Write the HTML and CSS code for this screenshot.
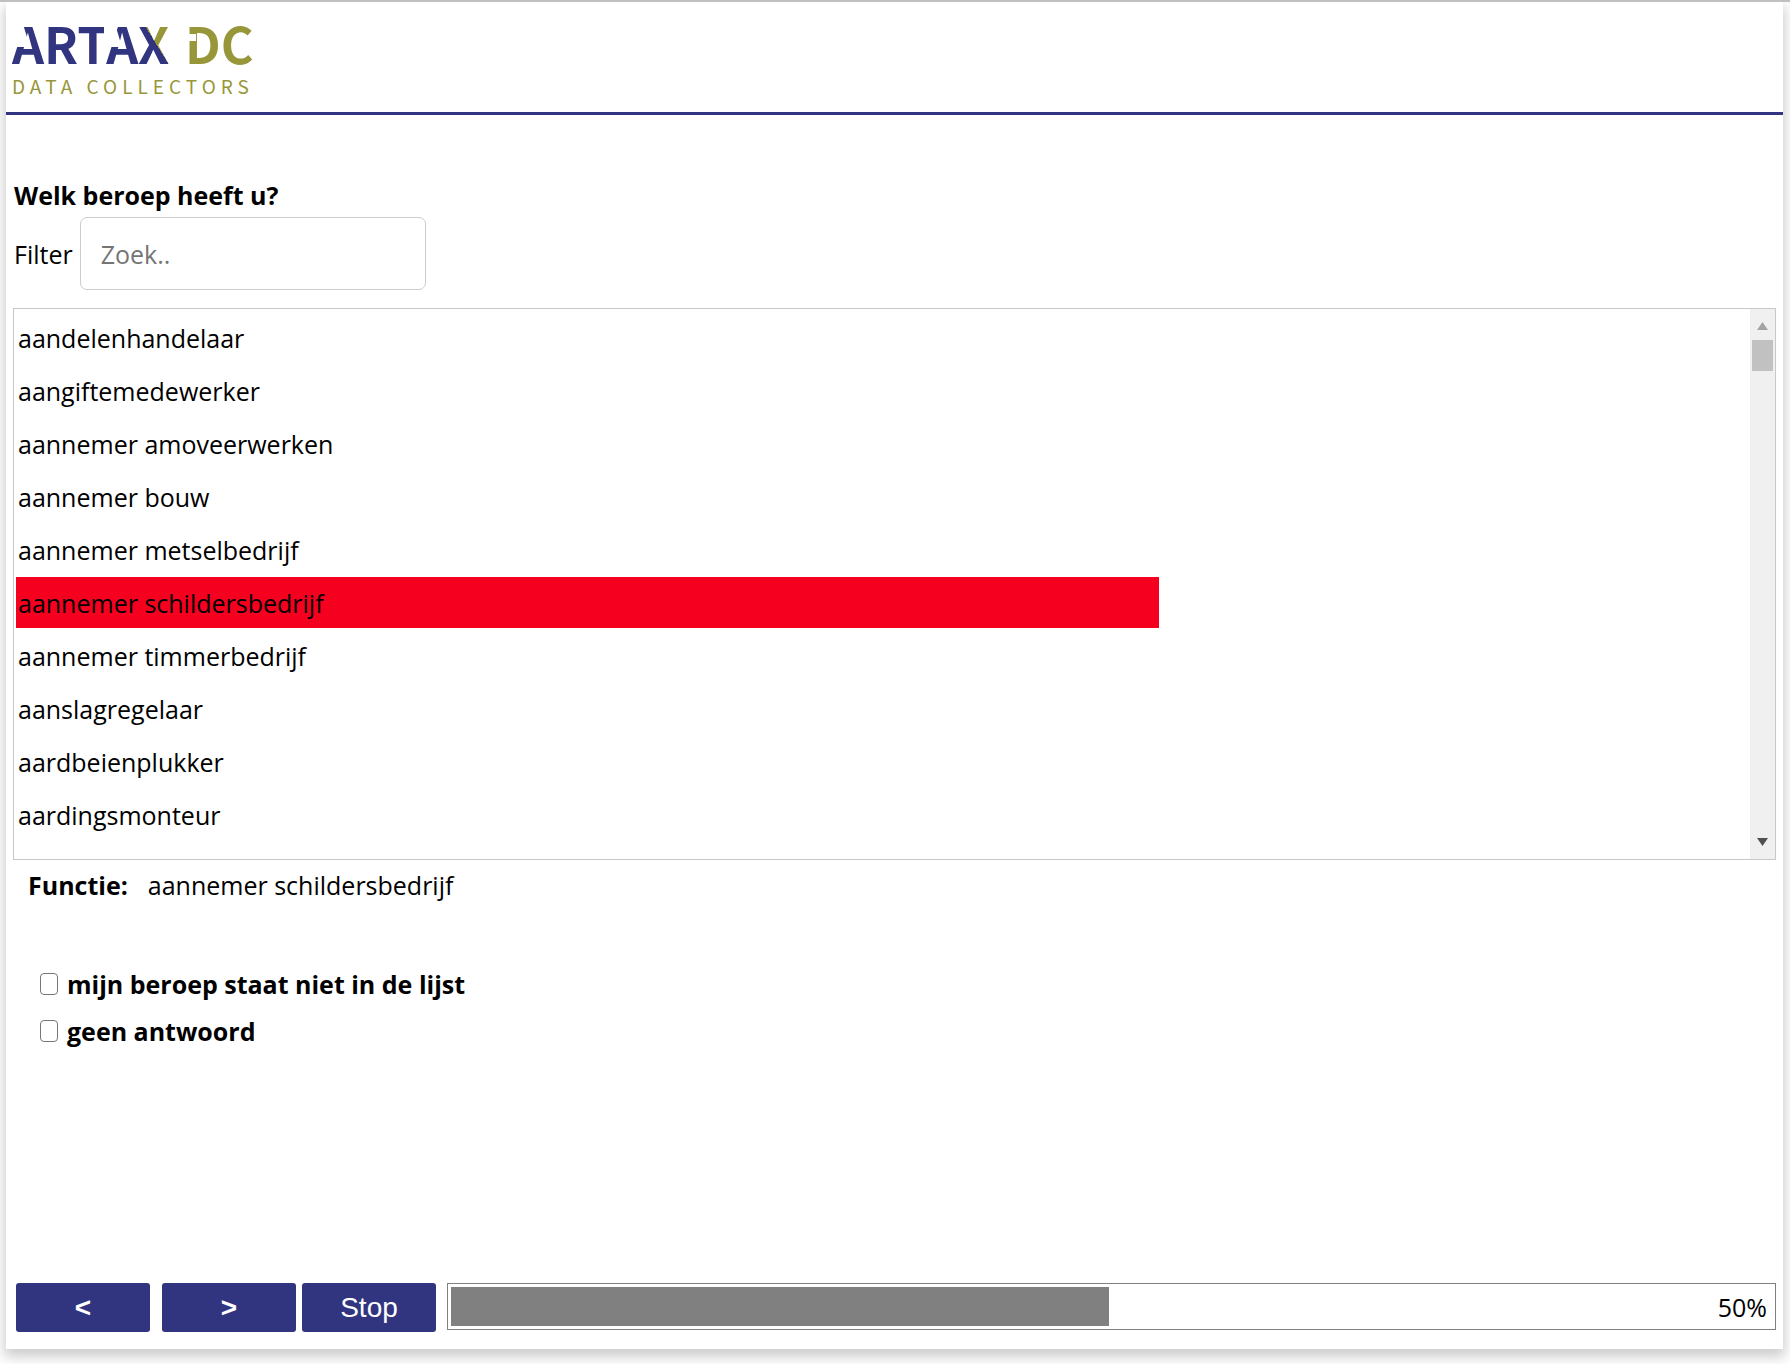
FILE: index.html
```html
<!DOCTYPE html>
<html lang="nl">
<head>
    <meta charset="UTF-8">
    <meta name="viewport" content="width=device-width, initial-scale=1.0">
    <title>Artax DC - Vragenlijst</title>
    <link rel="stylesheet" href="styles.css">
</head>
<body>
    <div class="page">
        <header class="header">
            <svg class="logo" width="260" height="80" viewBox="0 0 260 80" role="img" aria-label="Artax DC Data Collectors">
                <defs>
                    <!-- Blue with a green upper right arm for the X -->
                    <linearGradient id="x-fill" gradientUnits="userSpaceOnUse" x1="126" y1="40" x2="163" y2="17">
                        <stop offset="0.5" stop-color="#31347f"/>
                        <stop offset="0.5" stop-color="#97973a"/>
                    </linearGradient>
                </defs>
                <g class="logo-name">
                    <text class="blue" x="0" y="48">ARTA<tspan fill="url(#x-fill)">X</tspan></text>
                    <text class="green" x="173" y="48">DC</text>
                </g>
                <!-- Cuts in the letters -->
                <g fill="#fff">
                    <path d="M0 8h11l7 23H0z"/>
                    <path d="M92 8h11l7 23H92z"/>
                    <path d="M175 18h9v7h-9z"/>
                </g>
                <text class="logo-sub" x="0" y="78">DATA COLLECTORS</text>
            </svg>
        </header>

        <main class="content">
            <h1 class="question">Welk beroep heeft u?</h1>
            <div class="filter">
                <label for="filter-input">Filter</label>
                <input type="text" id="filter-input" placeholder="Zoek..">
            </div>

            <div class="list-box">
                <ul class="list" id="list" role="listbox" aria-label="Beroepen">
                    <li role="option">aandelenhandelaar</li>
                    <li role="option">aangiftemedewerker</li>
                    <li role="option">aannemer amoveerwerken</li>
                    <li role="option">aannemer bouw</li>
                    <li role="option">aannemer metselbedrijf</li>
                    <li role="option" class="selected" aria-selected="true">aannemer schildersbedrijf</li>
                    <li role="option">aannemer timmerbedrijf</li>
                    <li role="option">aanslagregelaar</li>
                    <li role="option">aardbeienplukker</li>
                    <li role="option">aardingsmonteur</li>
                    <li role="option">aannemer stallenbouw</li>
                </ul>
                <div class="scrollbar">
                    <svg width="11" height="8" viewBox="0 0 11 8"><path d="M5.5 0 11 8H0z" fill="#a3a3a3"/></svg>
                    <div class="thumb"></div>
                    <svg width="11" height="8" viewBox="0 0 11 8"><path d="M0 0h11L5.500 8z" fill="#505050"/></svg>
                </div>
            </div>

            <p class="result"><strong>Functie:</strong> <span id="result">aannemer schildersbedrijf</span></p>

            <div class="options">
                <label><input type="checkbox"> mijn beroep staat niet in de lijst</label>
                <label><input type="checkbox"> geen antwoord</label>
            </div>
        </main>

        <footer class="footer">
            <button type="button" class="btn btn-prev">&lt;</button>
            <button type="button" class="btn btn-next">&gt;</button>
            <button type="button" class="btn btn-stop">Stop</button>
            <div class="progress">
                <div class="progress-bar" style="width: 50%"></div>
                <span class="progress-text">50%</span>
            </div>
        </footer>
    </div>
</body>
</html>
```
FILE: styles.css
```css
* {
    box-sizing: border-box;
}
body {
    margin: 0;
    border-top: 2px solid #c0c0c0;
    font-family: "Open Sans", "Noto Sans", sans-serif;
    font-size: 25px;
    line-height: 32px;
    color: #000;
    background: #fff;
}
.page {
    display: flex;
    flex-direction: column;
    min-height: calc(100vh - 17px);
    margin: 0 7px 15px 6px;
    background: #fff;
    box-shadow: 0 6px 12px 2px rgba(0, 0, 0, 0.2);
}

/* Header with logo */
.header {
    padding: 14px 6px 16px;
    border-bottom: 3px solid #31347f;
}
.logo {
    display: block;
}
.logo-name {
    font-family: "Noto Sans CJK JP", sans-serif;
    font-size: 50px;
    font-weight: bold;
}
.logo-sub {
    font-family: "Noto Sans CJK JP", sans-serif;
    font-size: 19px;
    letter-spacing: 5px;
    fill: #97973a;
}
.blue {
    fill: #31347f;
}
.green {
    fill: #97973a;
}

/* Question */
.content {
    padding: 64px 7px 0;
}
.question {
    margin: 0 0 6px 1px;
    font-size: 25px;
    line-height: 32px;
}
.filter {
    display: flex;
    align-items: center;
    gap: 7px;
    margin: 0 0 18px 1px;
}
.filter input {
    width: 346px;
    height: 73px;
    padding: 0 20px;
    border: 1px solid #ccc;
    border-radius: 7px;
    font: inherit;
}
.filter input::placeholder {
    color: #757575;
}

/* List */
.list-box {
    display: flex;
    height: 552px;
    border: 1px solid #c8c8c8;
}
.list {
    flex: 1;
    margin: 0;
    padding: 3px 2px;
    overflow: hidden;
    list-style: none;
}
.list li {
    width: 66%;
    height: 51px;
    margin-bottom: 2px;
    padding: 0 2px;
    line-height: 52px;
    cursor: pointer;
}
.list .selected {
    background: #f60020;
}
.scrollbar {
    display: flex;
    flex-direction: column;
    align-items: center;
    gap: 10px;
    width: 25px;
    padding: 13px 2px;
    background: #f0f0f0;
}
.scrollbar .thumb {
    width: 21px;
    height: 31px;
    margin-bottom: auto;
    background: #c1c1c1;
}

.result {
    display: flex;
    gap: 20px;
    margin: 9px 15px 0;
}

/* Checkboxes */
.options {
    display: flex;
    flex-direction: column;
    gap: 15px;
    margin: 67px 27px 0;
    font-weight: bold;
}
.options label {
    display: flex;
    align-items: center;
    gap: 9px;
}
.options input {
    width: 18px;
    height: 22px;
    margin: 0;
    appearance: none;
    border: 1px solid #767676;
    border-radius: 4px;
}
.options input:checked {
    background: #31347f;
}

/* Footer with buttons and progress */
.footer {
    display: flex;
    gap: 6px;
    margin-top: auto;
    padding: 0 7px 17px 10px;
}
.btn {
    width: 134px;
    height: 49px;
    border: none;
    border-radius: 3px;
    background: #31347f;
    color: #fff;
    font-family: "Liberation Sans", Arial, sans-serif;
    font-size: 28px;
    cursor: pointer;
}
.btn-prev,
.btn-next {
    font-weight: bold;
}
.btn-prev {
    margin-right: 6px;
}
.progress {
    display: flex;
    flex: 1;
    align-items: center;
    justify-content: space-between;
    height: 47px;
    margin-left: 5px;
    padding: 3px 8px 3px 3px;
    border: 1px solid #808080;
}
.progress-bar {
    height: 100%;
    background: #808080;
}
```
